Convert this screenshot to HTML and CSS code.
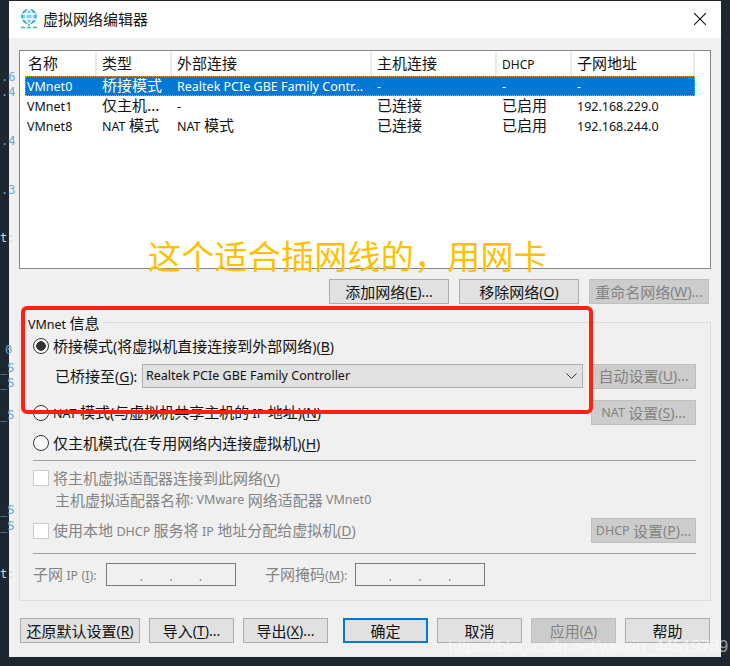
FILE: index.html
```html
<!DOCTYPE html>
<html lang="zh">
<head>
<meta charset="utf-8">
<title>虚拟网络编辑器</title>
<link rel="stylesheet" href="styles.css">
</head>
<body>
<div class="page">
  <div class="code">
    <span class="c1">.6</span><span class="c2">.4</span><span class="c3">.4</span><span class="c4">.3</span><span class="c5">t:</span>
    <span class="c6">0</span><span class="c7">_S</span><span class="c8">_S</span><span class="c9">_S</span><span class="c10">_S</span><span class="c11">_S</span><span class="c12">t:</span>
  </div>
  <div class="win">
    <div class="titlebar">
      <svg class="appicon" width="18" height="20" viewBox="0 0 18 20">
        <circle cx="9" cy="7.5" r="7" fill="#7fd0ee" stroke="#29a5dc" stroke-width="1.6"/>
        <ellipse cx="9" cy="7.5" rx="3.2" ry="7" fill="none" stroke="#fff" stroke-width="1.3"/>
        <path d="M2 5h14M2 10h14" stroke="#fff" stroke-width="1.3"/>
        <path d="M9 15v2" stroke="#5c9" stroke-width="2"/>
        <path d="M1 18.5h16" stroke="#3fb8a0" stroke-width="1.6" stroke-dasharray="4 2"/>
      </svg>
      <span class="wintitle">虚拟网络编辑器</span>
      <svg class="close" width="12" height="12" viewBox="0 0 12 12"><path d="M0 0L12 12M12 0L0 12" stroke="#111" stroke-width="1.1" fill="none"/></svg>
    </div>
    <div class="content">
      <div class="list">
        <div class="lrow head">
          <div class="cell first">名称</div><div class="cell">类型</div><div class="cell">外部连接</div><div class="cell">主机连接</div><div class="cell"><span class="l">DHCP</span></div><div class="cell">子网地址</div>
        </div>
        <div class="lrow sel">
          <div class="cell first"><span class="l">VMnet0</span></div><div class="cell">桥接模式</div><div class="cell"><span class="l">Realtek PCIe GBE Family Contr...</span></div><div class="cell"><span class="l">-</span></div><div class="cell"><span class="l">-</span></div><div class="cell"><span class="l">-</span></div>
        </div>
        <div class="lrow">
          <div class="cell first"><span class="l">VMnet1</span></div><div class="cell">仅主机...</div><div class="cell"><span class="l">-</span></div><div class="cell">已连接</div><div class="cell">已启用</div><div class="cell"><span class="l">192.168.229.0</span></div>
        </div>
        <div class="lrow">
          <div class="cell first"><span class="l">VMnet8</span></div><div class="cell"><span class="l">NAT</span> 模式</div><div class="cell"><span class="l">NAT</span> 模式</div><div class="cell">已连接</div><div class="cell">已启用</div><div class="cell"><span class="l">192.168.244.0</span></div>
        </div>
      </div>
      <div class="listbtns">
        <div class="btn w120">添加网络<span class="m">(<u>E</u>)...</span></div>
        <div class="btn w120">移除网络<span class="m">(<u>O</u>)</span></div>
        <div class="btn w120 off">重命名网络<span class="m">(<u>W</u>)...</span></div>
      </div>
      <div class="group">
        <div class="legend"><span class="l">VMnet</span> 信息</div>
        <div class="row r1"><span class="radio on"></span><span>桥接模式<span class="m">(</span>将虚拟机直接连接到外部网络<span class="m">)(<u>B</u>)</span></span></div>
        <div class="row r2">
          <span class="bridge">已桥接至<span class="m">(<u>G</u>):</span></span>
          <div class="combo"><span class="l">Realtek PCIe GBE Family Controller</span>
            <svg width="11" height="6" viewBox="0 0 11 6"><path d="M.5.5L5.500 5.500L10.500.5" stroke="#333" fill="none"/></svg>
          </div>
          <div class="btn w105 off side">自动设置<span class="m">(<u>U</u>)...</span></div>
        </div>
        <div class="row r3"><span class="radio"></span><span><span class="l">NAT</span> 模式<span class="m">(</span>与虚拟机共享主机的 <span class="l">IP</span> 地址<span class="m">)(<u>N</u>)</span></span>
          <div class="btn w105 off end"><span class="l">NAT</span> 设置<span class="m">(<u>S</u>)...</span></div>
        </div>
        <div class="row r4"><span class="radio"></span><span>仅主机模式<span class="m">(</span>在专用网络内连接虚拟机<span class="m">)(<u>H</u>)</span></span></div>
        <div class="rule r5"></div>
        <div class="row r6 dis"><span class="check"></span><span>将主机虚拟适配器连接到此网络<span class="m">(<u>V</u>)</span></span></div>
        <div class="row r7 dis">主机虚拟适配器名称<span class="l">: VMware</span> 网络适配器 <span class="l">VMnet0</span></div>
        <div class="row r8 dis"><span class="check"></span><span>使用本地 <span class="l">DHCP</span> 服务将 <span class="l">IP</span> 地址分配给虚拟机<span class="m">(<u>D</u>)</span></span>
          <div class="btn w105 off end"><span class="l">DHCP</span> 设置<span class="m">(<u>P</u>)...</span></div>
        </div>
        <div class="rule r9"></div>
        <div class="row r10 dis">
          <span class="lab1">子网 <span class="l">IP (<u>I</u>):</span></span>
          <div class="ip"><i>.</i><i>.</i><i>.</i></div>
          <span class="lab2">子网掩码<span class="l">(<u>M</u>):</span></span>
          <div class="ip"><i>.</i><i>.</i><i>.</i></div>
        </div>
      </div>
      <div class="footer">
        <div class="btn w120">还原默认设置<span class="m">(<u>R</u>)</span></div>
        <div class="btn w85 g9">导入<span class="m">(<u>T</u>)...</span></div>
        <div class="btn w85 g9">导出<span class="m">(<u>X</u>)...</span></div>
        <div class="btn w85 g15 def">确定</div>
        <div class="btn w85 g9">取消</div>
        <div class="btn w85 g9 off">应用<span class="m">(<u>A</u>)</span></div>
        <div class="btn w85 g9">帮助</div>
      </div>
    </div>
  </div>
  <div class="redbox"></div>
  <div class="note">这个适合插网线的，用网卡</div>
  <div class="mark">https://blog.csdn.net/weixin_44519789</div>
</div>
</body>
</html>
```

FILE: styles.css
```css
* { box-sizing: border-box; }
html, body { margin: 0; padding: 0; }
body { width: 730px; height: 666px; overflow: hidden; background: #1e2630; }
.page {
  position: relative;
  width: 730px;
  height: 666px;
  overflow: hidden;
  padding: 1px 9px 9px;
  background: #1e2630;
  font-family: "Noto Sans CJK SC", "Noto Sans", sans-serif;
  font-size: 15px;
  line-height: 20px;
  color: #111;
}
.l { font-family: "Noto Sans", "Liberation Sans", sans-serif; font-size: 12.500px; }
.m { font-family: "Noto Sans", "Liberation Sans", sans-serif; font-size: 14px; }
u { text-underline-offset: 2px; }

.code span { position: absolute; left: 0; font: 12px/14px "DejaVu Sans Mono", monospace; color: #6fa8c9; }
.code .c1 { top: 70px; left: 1px; }
.code .c2 { top: 85px; left: 1px; }
.code .c3 { top: 134px; left: 1px; }
.code .c4 { top: 183px; left: 1px; }
.code .c5 { top: 231px; left: 0; }
.code .c6 { top: 343px; left: 5px; }
.code .c7 { top: 361px; left: 0; }
.code .c8 { top: 376px; left: 0; }
.code .c9 { top: 408px; left: 0; }
.code .c10 { top: 503px; left: 0; }
.code .c11 { top: 519px; left: 0; }
.code .c12 { top: 567px; left: 0; }
.code .c5, .code .c12 { color: #cfd8dc; }

.win { display: flex; flex-direction: column; width: 712px; height: 656px; background: #f0f0f0; }
.titlebar { display: flex; align-items: center; height: 37px; padding: 0 15px 2px 11px; background: #fff; flex: none; }
.appicon { flex: none; }
.wintitle { margin-left: 5px; font-size: 15px; color: #111; }
.close { margin-left: auto; }

.content { display: flex; flex-direction: column; padding: 12px 10px 0; }

.list { height: 219px; padding: 1px 0 0 5px; background: #fff; border: 1px solid #828790; }
.lrow { display: grid; grid-template-columns: 70px 75px 200px 125px 75px 125px; width: 670px; height: 20px; }
.cell { padding: 0 0 0 7px; line-height: 18px; white-space: nowrap; }
.cell.first { padding-left: 2px; }
.head { height: 24px; }
.head .cell { border-left: 2px solid #eaeaea; padding-left: 5px; line-height: 22px; }
.head .cell.first { border-left: 0; padding-left: 3px; }
.head .cell:last-child { border-right: 2px solid #eaeaea; }
.head .l { font-size: 12px; }
.sel { background: #0078d7; color: #fff; outline: 1px dotted #e59a3c; outline-offset: -1px; }

.listbtns { display: flex; justify-content: flex-end; gap: 10px; margin-top: 10px; padding-right: 2px; }
.btn { display: flex; align-items: center; justify-content: center; height: 25px; padding: 0 2px; background: #e1e1e1; border: 1px solid #adadad; white-space: pre; flex: none; }
.w120 { width: 120px; }
.w105 { width: 105px; }
.w85 { width: 85px; }
.off { background: #cccccc; border-color: #bfbfbf; color: #838383; }
.def { border: 2px solid #0078d7; }

.group { position: relative; height: 279px; margin-top: 18px; padding: 0 14px 0 13px; border: 1px solid #dcdcdc; }
.legend { position: absolute; top: -10px; left: 6px; height: 20px; padding: 0 3px 0 2px; background: #f0f0f0; }
.row { display: flex; align-items: center; position: relative; white-space: pre; }
.radio { flex: none; width: 16px; height: 16px; margin-right: 4px; background: #fff; border: 1px solid #333; border-radius: 50%; }
.radio.on { background: radial-gradient(circle, #333 0 4.500px, #fff 5px); }
.check { flex: none; width: 16px; height: 16px; margin-right: 4px; background: #fff; border: 1px solid #ccc; }
.r1 { height: 24px; margin-top: 11px; }
.r2 { height: 26px; margin-top: 5px; padding-left: 22px; }
.bridge { width: 87px; flex: none; }
.combo { display: flex; align-items: center; justify-content: space-between; width: 441px; height: 24px; padding: 0 5px 0 3px; background: #e1e1e1; border: 1px solid #adadad; flex: none; }
.side { margin-left: 8px; }
.r3 { height: 25px; margin-top: 11px; }
.end { margin-left: auto; }
.r4 { height: 24px; margin-top: 6px; }
.rule { height: 1px; background: #a0a0a0; }
.r5 { margin-top: 5px; }
.dis { color: #838383; }
.r6 { height: 24px; margin-top: 5px; }
.r7 { height: 20px; padding-left: 22px; }
.r8 { height: 25px; margin-top: 8px; }
.r9 { margin-top: 10px; }
.r10 { height: 23px; margin-top: 9px; }
.lab1 { width: 73px; flex: none; }
.lab2 { width: 90px; flex: none; margin-left: 29px; }
.ip { display: flex; justify-content: center; gap: 26px; width: 130px; height: 23px; background: #f0f0f0; border: 1px solid #7a7a7a; flex: none; }
.ip i { font-style: normal; font-size: 13px; line-height: 24px; }

.footer { display: flex; margin-top: 17px; padding-left: 1px; }
.g9 { margin-left: 9px; }
.g15 { margin-left: 15px; }

.redbox { position: absolute; left: 21px; top: 306px; width: 572px; height: 108px; border: 4px solid #ff2015; border-radius: 6px; }
.note { position: absolute; left: 148px; top: 231px; font-size: 33px; line-height: 48px; letter-spacing: .25px; color: #ffc000; white-space: nowrap; }
.mark { position: absolute; left: 448px; top: 635px; font: 17px/24px "Liberation Sans", sans-serif; letter-spacing: -.25px; color: rgba(255,255,255,.55); white-space: nowrap; }
```
